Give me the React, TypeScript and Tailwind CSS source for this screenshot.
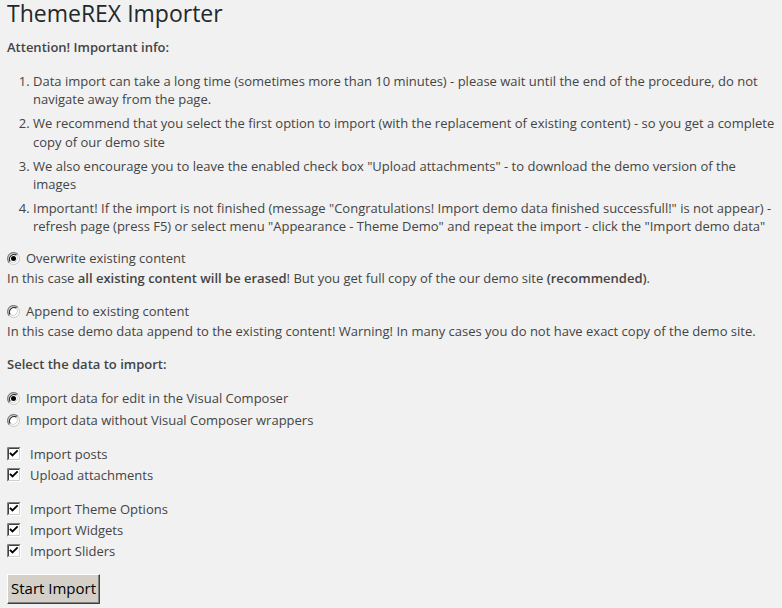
import React from 'react';

const notes = [
  'Data import can take a long time (sometimes more than 10 minutes) - please wait until the end of the procedure, do not navigate away from the page.',
  'We recommend that you select the first option to import (with the replacement of existing content) - so you get a complete copy of our demo site',
  'We also encourage you to leave the enabled check box "Upload attachments" - to download the demo version of the images',
  'Important! If the import is not finished (message "Congratulations! Import demo data finished successfull!" is not appear) - refresh page (press F5) or select menu "Appearance - Theme Demo" and repeat the import - click the "Import demo data"',
];

// old-school windows radio
function Radio({ checked }: { checked?: boolean }) {
  return (
    <svg width="13" height="13" viewBox="0 0 13 13" className="shrink-0">
      <circle cx="6.5" cy="6.5" r="6" fill="#fff" stroke="#c8c8c8" strokeWidth="1" />
      <path d="M2.26 10.74 A6 6 0 0 1 10.74 2.26" fill="none" stroke="#7a7a7a" strokeWidth="1.2" />
      <path d="M3.3 9.7 A4.6 4.6 0 0 1 9.7 3.3" fill="none" stroke="#333" strokeWidth="1.2" />
      <path d="M9.7 3.3 A4.6 4.6 0 0 1 3.3 9.7" fill="none" stroke="#d4d0c8" strokeWidth="1" />
      {checked && <circle cx="6.5" cy="6.5" r="2.5" fill="#000" />}
    </svg>
  );
}

function Checkbox() {
  return (
    <svg width="14" height="14" viewBox="0 0 14 14" className="shrink-0">
      <rect x="0" y="0" width="14" height="14" fill="#fff" />
      <path d="M0.5 13.5V0.5H13.5" fill="none" stroke="#808080" />
      <path d="M1.5 12.5V1.5H12.5" fill="none" stroke="#404040" />
      <path d="M0.5 13.5H13.5V0.5" fill="none" stroke="#ffffff" />
      <path d="M1.5 12.5H12.5V1.5" fill="none" stroke="#d4d0c8" />
      <path d="M3.5 6.5L5.5 8.5L10 4" fill="none" stroke="#000" strokeWidth="1.8" strokeLinecap="square" />
    </svg>
  );
}

function RadioRow({ label, checked, h = 'h-[20px]' }: { label: string; checked?: boolean; h?: string }) {
  return (
    <label className={`flex items-center gap-[6px] ${h}`}>
      <Radio checked={checked} />
      <span>{label}</span>
    </label>
  );
}

function CheckRow({ label }: { label: string }) {
  return (
    <label className="flex h-[21px] items-center gap-[9px]">
      <Checkbox />
      <span>{label}</span>
    </label>
  );
}

export default function App() {
  return (
    <div
      className="min-h-screen bg-[#f1f1f1] pl-[7px] pr-[4px] text-[13px] leading-[1.4] text-[#444]"
      style={{ fontFamily: '"Open Sans", "Liberation Sans", sans-serif' }}
    >
      <h1 className="m-0 text-[23px] leading-[26px] font-normal text-[#23282d]">ThemeREX Importer</h1>

      <p className="mt-[12px] h-[18px] leading-[18px] font-semibold">Attention! Important info:</p>

      <ol className="mt-[16px] ml-[26px] list-decimal space-y-[6px]">
        {notes.map((n) => (
          <li key={n}>{n}</li>
        ))}
      </ol>

      <div className="mt-[13px]">
        <RadioRow label="Overwrite existing content" checked />
        <p className="h-[18px] leading-[18px]">
          In this case <b className="font-semibold">all existing content will be erased</b>! But you get full copy of the our demo site{' '}
          <b className="font-semibold">(recommended)</b>.
        </p>
      </div>

      <div className="mt-[15px]">
        <RadioRow label="Append to existing content" />
        <p className="h-[18px] leading-[18px]">
          In this case demo data append to the existing content! Warning! In many cases you do not have exact copy of the demo site.
        </p>
      </div>

      <p className="mt-[15px] h-[18px] leading-[18px] font-semibold">Select the data to import:</p>

      <div className="mt-[15px]">
        <RadioRow label="Import data for edit in the Visual Composer" checked h="h-[22px]" />
        <RadioRow label="Import data without Visual Composer wrappers" h="h-[22px]" />
      </div>

      <div className="mt-[12px]">
        <CheckRow label="Import posts" />
        <CheckRow label="Upload attachments" />
      </div>

      <div className="mt-[13px]">
        <CheckRow label="Import Theme Options" />
        <CheckRow label="Import Widgets" />
        <CheckRow label="Import Sliders" />
      </div>

      <button className="mt-[12px] flex h-[30px] w-[93px] items-center justify-center border border-t-white border-l-white border-r-[#404040] border-b-[#404040] bg-[#d4d0c8] text-[15px] text-black shadow-[inset_-1px_-1px_0_#808080]">
        Start Import
      </button>
    </div>
  );
}
